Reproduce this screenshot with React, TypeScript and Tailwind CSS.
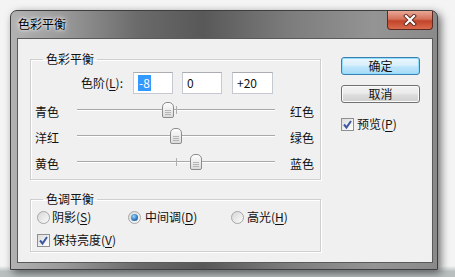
import React from "react";

const ui = "font-['Noto_Sans_CJK_SC','Noto_Sans',sans-serif] text-[12px] leading-[14px] text-[#111111]";

function U({ children }: { children: React.ReactNode }) {
  return <span className="underline underline-offset-2">{children}</span>;
}

function CheckBox({ checked }: { checked?: boolean }) {
  return (
    <span className="flex h-[13px] w-[13px] shrink-0 items-center justify-center border border-[#8e8f8f] bg-gradient-to-br from-[#dcdcdc] to-white">
      {checked && (
        <svg width="11" height="11" viewBox="0 0 11 11">
          <path d="M2 5.5 L4.5 8.5 L9 2" fill="none" stroke="#3c57a3" strokeWidth="2" />
        </svg>
      )}
    </span>
  );
}

function Radio({ checked }: { checked?: boolean }) {
  return (
    <span className="flex h-[13px] w-[13px] shrink-0 items-center justify-center rounded-full border border-[#a6a6a6] bg-gradient-to-br from-[#d8d8d8] to-[#fafafa]">
      {checked && (
        <span className="h-[7px] w-[7px] rounded-full bg-[radial-gradient(circle_at_40%_35%,#9ad8ff,#2a73b8_60%,#1b4f86)]" />
      )}
    </span>
  );
}

function Slider({ left, right, pos }: { left: string; right: string; pos: number }) {
  // track is 198px wide, centre at 99, about 1px per unit
  return (
    <div className="flex h-[26px] items-center pl-[4px]">
      <span className="w-[42px] pt-[4px]">{left}</span>
      <div className="relative h-[26px] w-[198px]">
        <div className="absolute left-0 right-0 top-[12px] h-[2px] border-t border-[#a9a9a9] border-b border-b-white" />
        <div className="absolute left-[99px] top-[9px] h-[8px] w-px bg-[#b0b0b0]" />
        <div
          className="absolute top-[5px] h-[16px] w-[12px] rounded-t-[5px] rounded-b-[2px] border border-[#8c8c8c] bg-gradient-to-b from-[#fdfdfd] to-[#dcdcdc]"
          style={{ left: 99 + pos - 6 }}
        >
          <div className="mx-auto mt-[7px] h-px w-[6px] bg-[#b5b5b5]" />
          <div className="mx-auto mt-[1px] h-px w-[6px] bg-[#b5b5b5]" />
          <div className="mx-auto mt-[1px] h-px w-[6px] bg-[#b5b5b5]" />
        </div>
      </div>
      <span className="ml-[15px] pt-[4px]">{right}</span>
    </div>
  );
}

function Field({ children, w }: { children: React.ReactNode; w: string }) {
  return (
    <div className={`flex h-[22px] items-center border border-[#c5cad2] border-t-[#abadb3] bg-white pl-[4px] ${w}`}>
      {children}
    </div>
  );
}

export default function App() {
  return (
    <div className={`h-[277px] w-[455px] overflow-hidden bg-[linear-gradient(180deg,#f4f4f4_0%,#f4f4f4_96%,#b9bfbf_98%)] pl-[10px] pt-[10px] ${ui}`}>
      <div className="flex h-[260px] w-[428px] flex-col rounded-t-[7px] border border-[#3e3e3e] bg-[linear-gradient(90deg,#b2b2b2_0%,#9a9a9a_12%,#6a6a6a_30%,#585858_45%,#7c7c7c_65%,#949494_85%,#8a8a8a_100%)] pl-[6px] pb-[6px] shadow-[3px_3px_8px_rgba(0,0,0,0.55)]">
        {/* title bar */}
        <div className="flex h-[27px] items-start">
          <span className="pl-[1px] pt-[6px] text-[12px] text-black [text-shadow:0_0_6px_#ffffff,0_0_3px_#ffffff]">色彩平衡</span>
          <div className="ml-auto mr-[4px] flex h-[19px] w-[46px] items-center justify-center rounded-b-[4px] border border-t-0 border-[#5c2a20] bg-[linear-gradient(180deg,#e9a896_0%,#d4715a_45%,#c2442a_55%,#d96a4c_100%)]">
            <svg width="14" height="12" viewBox="0 0 14 12">
              <path d="M3 2 L11 10 M11 2 L3 10" stroke="#5a2a20" strokeWidth="4" strokeLinecap="square" />
              <path d="M3 2 L11 10 M11 2 L3 10" stroke="#ffffff" strokeWidth="2.2" strokeLinecap="square" />
            </svg>
          </div>
        </div>

        {/* client area */}
        <div className="flex h-[225px] w-[416px] border border-[#5a5a5a] bg-[#f0f0f0]">
          <div className="ml-[12px] mt-[13px] flex flex-col">
            <fieldset className="w-[291px] border border-[#cfcfcf] pb-[4px] shadow-[1px_1px_0_#ffffff,inset_1px_1px_0_#ffffff]">
              <legend className="ml-[12px] px-[3px]">色彩平衡</legend>
              <div className="mt-[6px] flex items-center">
                <span className="w-[92px] text-right">色阶(<U>L</U>):</span>
                <div className="ml-[10px]">
                  <Field w="w-[40px]">
                    <span className="bg-[#3399ff] px-px leading-[16px] text-white">-8</span>
                  </Field>
                </div>
                <div className="ml-[9px]">
                  <Field w="w-[40px]">0</Field>
                </div>
                <div className="ml-[10px]">
                  <Field w="w-[41px]">+20</Field>
                </div>
              </div>
              <div className="mt-[3px]">
                <Slider left="青色" right="红色" pos={-8} />
                <Slider left="洋红" right="绿色" pos={0} />
                <Slider left="黄色" right="蓝色" pos={20} />
              </div>
            </fieldset>

            <fieldset className="mt-[12px] w-[291px] border border-[#cfcfcf] pb-[3px] shadow-[1px_1px_0_#ffffff,inset_1px_1px_0_#ffffff]">
              <legend className="ml-[12px] px-[3px]">色调平衡</legend>
              <div className="mt-[3px] flex h-[16px] items-center pl-[6px]">
                <div className="flex w-[91px] items-center gap-[2px]">
                  <Radio />
                  <span>阴影(<U>S</U>)</span>
                </div>
                <div className="flex w-[103px] items-center gap-[4px]">
                  <Radio checked />
                  <span>中间调(<U>D</U>)</span>
                </div>
                <div className="flex items-center gap-[3px]">
                  <Radio />
                  <span>高光(<U>H</U>)</span>
                </div>
              </div>
              <div className="mt-[7px] flex h-[16px] items-center gap-[3px] pl-[6px]">
                <CheckBox checked />
                <span>保持亮度(<U>V</U>)</span>
              </div>
            </fieldset>
          </div>

          {/* buttons */}
          <div className="ml-[20px] mt-[18px] flex flex-col">
            <button className="flex h-[18px] w-[79px] items-center justify-center rounded-[3px] border border-[#3c7fb1] bg-[linear-gradient(180deg,#eaf6fd_0%,#d9f0fc_45%,#bee6fd_55%,#a7d9f5_100%)] shadow-[inset_0_0_0_1px_#8fdcfd]">
              确定
            </button>
            <button className="mt-[10px] flex h-[18px] w-[79px] items-center justify-center rounded-[3px] border border-[#707070] bg-[linear-gradient(180deg,#f2f2f2_0%,#ebebeb_45%,#dddddd_55%,#cfcfcf_100%)] shadow-[inset_0_0_0_1px_#fbfbfb]">
              取消
            </button>
            <div className="mt-[14px] flex items-center gap-[3px]">
              <CheckBox checked />
              <span>预览(<U>P</U>)</span>
            </div>
          </div>
        </div>
      </div>
    </div>
  );
}
